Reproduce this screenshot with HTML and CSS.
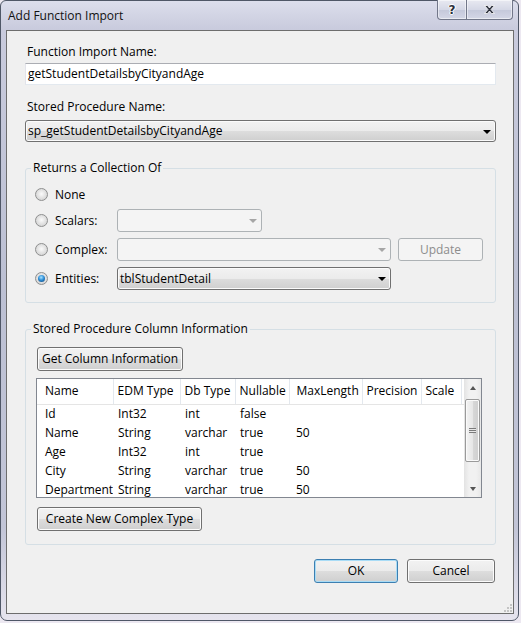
FILE: index.html
```html
<html>
<head>
    <title>Add Function Import</title>
    <link rel="stylesheet" href="styles.css">
</head>
<body>
    <div class="window">
        <div class="titlebar">
            <span class="title">Add Function Import</span>
            <div class="caption-btns">
                <span class="cap-btn help">?</span>
                <span class="cap-btn close">
                    <svg width="11" height="9" viewBox="0 0 11 9"><path d="M0.5 0.5h3l2 2.5l2-2.5h3l-3.5 4l3.5 4h-3l-2-2.5l-2 2.5h-3l3.5-4z" fill="#2b2f3b" stroke="#fff" stroke-width="0.8"/></svg>
                </span>
            </div>
        </div>

        <div class="client">
            <div class="field-label first">Function Import Name:</div>
            <div class="textbox">getStudentDetailsbyCityandAge</div>

            <div class="field-label">Stored Procedure Name:</div>
            <div class="combo wide">
                <span>sp_getStudentDetailsbyCityandAge</span>
                <span class="arrow"></span>
            </div>

            <fieldset class="group returns">
                <legend>Returns a Collection Of</legend>
                <div class="opt-row none">
                    <span class="radio"></span><span class="opt-label">None</span>
                </div>
                <div class="opt-row">
                    <span class="radio"></span><span class="opt-label">Scalars:</span>
                    <div class="combo off short"><span></span><span class="arrow"></span></div>
                </div>
                <div class="opt-row">
                    <span class="radio"></span><span class="opt-label">Complex:</span>
                    <div class="combo off long"><span></span><span class="arrow"></span></div>
                    <button class="btn off update">Update</button>
                </div>
                <div class="opt-row">
                    <span class="radio on"></span><span class="opt-label">Entities:</span>
                    <div class="combo long"><span>tblStudentDetail</span><span class="arrow"></span></div>
                </div>
            </fieldset>

            <fieldset class="group columns">
                <legend>Stored Procedure Column Information</legend>
                <button class="btn get-cols">Get Column Information</button>
                <div class="grid">
                    <div class="grid-view">
                        <table class="col-table">
                            <colgroup>
                                <col style="width:76px">
                                <col style="width:67px">
                                <col style="width:55px">
                                <col style="width:54px">
                                <col style="width:73px">
                                <col style="width:59px">
                                <col style="width:40px">
                                <col>
                            </colgroup>
                            <thead>
                                <tr><th class="first-col">Name</th><th>EDM Type</th><th>Db Type</th><th>Nullable</th><th class="maxlen">MaxLength</th><th>Precision</th><th>Scale</th><th class="filler"></th></tr>
                            </thead>
                            <tbody>
                                <tr><td class="first-col">Id</td><td>Int32</td><td>int</td><td>false</td><td class="maxlen"></td><td></td><td></td><td></td></tr>
                                <tr><td class="first-col">Name</td><td>String</td><td>varchar</td><td>true</td><td class="maxlen">50</td><td></td><td></td><td></td></tr>
                                <tr><td class="first-col">Age</td><td>Int32</td><td>int</td><td>true</td><td class="maxlen"></td><td></td><td></td><td></td></tr>
                                <tr><td class="first-col">City</td><td>String</td><td>varchar</td><td>true</td><td class="maxlen">50</td><td></td><td></td><td></td></tr>
                                <tr><td class="first-col">Department</td><td>String</td><td>varchar</td><td>true</td><td class="maxlen">50</td><td></td><td></td><td></td></tr>
                            </tbody>
                        </table>
                    </div>
                    <div class="vscroll">
                        <div class="sb-btn"><span class="sb-arrow up"></span></div>
                        <div class="sb-track">
                            <div class="sb-thumb"><span class="sb-grip"></span></div>
                        </div>
                        <div class="sb-btn"><span class="sb-arrow down"></span></div>
                    </div>
                </div>
                <button class="btn new-type">Create New Complex Type</button>
            </fieldset>

            <div class="dialog-btns">
                <button class="btn ok">OK</button>
                <button class="btn cancel">Cancel</button>
            </div>

            <svg class="size-grip" width="8" height="8" viewBox="0 0 8 8">
                <rect x="6" y="0" width="2" height="2" fill="#c4c4c4"/>
                <rect x="3" y="3" width="2" height="2" fill="#c4c4c4"/>
                <rect x="6" y="3" width="2" height="2" fill="#c4c4c4"/>
                <rect x="0" y="6" width="2" height="2" fill="#c4c4c4"/>
                <rect x="3" y="6" width="2" height="2" fill="#c4c4c4"/>
                <rect x="6" y="6" width="2" height="2" fill="#c4c4c4"/>
            </svg>
        </div>
    </div>
</body>
</html>
```

FILE: styles.css
```css
* { box-sizing: border-box; }
body { margin: 0; background: #ece8f1; font-family: "Open Sans", sans-serif; font-size: 12px; line-height: 16px; color: #000; }

/* window frame */
.window { width: 519px; height: 621px; border: 1px solid #4f5767; border-radius: 6px 6px 7px 7px; padding: 0 4px 6px 5px; display: flex; flex-direction: column;
    background: linear-gradient(to bottom, #dcdeec 0, #c9cbdd 28px, #bcc0d3 45%, #c2c5d7 85%, #e6e4ee 100%); }
.titlebar { height: 29px; display: flex; justify-content: space-between; align-items: flex-start; }
.title { padding: 7px 0 0 2px; color: #111; }
.caption-btns { display: flex; margin-top: -1px; margin-right: 1px; }
.cap-btn { height: 20px; display: flex; align-items: center; justify-content: center; border: 1px solid #727789; border-top: none;
    background: linear-gradient(to bottom, #e8e9f1 0, #d5d8e6 50%, #c4c8da 51%, #d4d7e6 100%); box-shadow: inset 0 0 0 1px rgba(255,255,255,0.5); }
.cap-btn.help { width: 30px; border-radius: 0 0 0 4px; font-family: "DejaVu Sans", sans-serif; font-weight: bold; font-size: 12px; color: #2b2f3b;
    text-shadow: 1px 0 #fff, -1px 0 #fff, 0 1px #fff, 0 -1px #fff; }
.cap-btn.close { width: 46px; border-left: none; border-radius: 0 0 4px 0; }

/* client area */
.client { height: 584px; border: 1px solid #6d6d6d; background: #f0f0f0; padding: 0 17px 1px 18px; display: flex; flex-direction: column; }
.field-label { margin-top: 14px; height: 16px; padding-left: 2px; }
.field-label.first { margin-top: 13px; }
.textbox { margin-top: 3px; height: 22px; background: #fff; border: 1px solid; border-color: #abadb3 #e3e9ef #e3e9ef #e2e3ea; padding: 2px 2px; }

.combo { height: 23px; border: 1px solid #707070; border-radius: 3px; display: flex; align-items: center; justify-content: space-between; padding: 0 4px 0 2px;
    background: linear-gradient(to bottom, #f2f2f2 0, #ebebeb 50%, #dddddd 51%, #cfcfcf 100%); box-shadow: inset 0 0 0 1px #fbfbfb; }
.combo.wide { margin-top: 5px; height: 22px; }
.combo .arrow { width: 0; height: 0; border-left: 4px solid transparent; border-right: 4px solid transparent; border-top: 4px solid #000; margin-top: 1px; }
.combo.off { background: #f4f4f4; border-color: #adb2b5; box-shadow: none; }
.combo.off .arrow { border-top-color: #a6a6a6; }
.combo.short { width: 145px; }
.combo.long { width: 274px; }

/* group boxes */
.group { margin: 18px 0 0 0; border: 1px solid #d5dfe5; border-radius: 3px; min-width: 0; }
.group legend { padding: 0 2px; line-height: 16px; }
.returns { padding: 7px 0 12px 9px; }
.returns legend { margin-left: -4px; }
.opt-row { height: 23px; display: flex; align-items: center; margin-top: 6px; }
.opt-row.none { margin-top: 0; margin-bottom: -3px; }
.radio { width: 13px; height: 13px; border-radius: 50%; border: 1px solid #8e8f8f; margin-right: 7px; flex: none;
    background: radial-gradient(circle at 50% 45%, #fbfbfb 0, #e4e4e4 45%, #cbcbcb 100%); }
.radio.on::after { content: ""; display: block; width: 7px; height: 7px; margin: 2px; border-radius: 50%;
    background: radial-gradient(circle at 45% 35%, #a8e3ff 0, #2f8fd8 45%, #0d3d6e 100%); }
.opt-label { width: 62px; }

.btn { font: inherit; color: #000; height: 24px; border: 1px solid #707070; border-radius: 3px; padding: 0; white-space: nowrap;
    background: linear-gradient(to bottom, #f2f2f2 0, #ebebeb 50%, #dddddd 51%, #cfcfcf 100%); box-shadow: inset 0 0 0 1px #fcfcfc; }
.btn.off { color: #8d8d8d; background: #f4f4f4; border-color: #adb2b5; box-shadow: none; }
.btn.update { width: 85px; height: 23px; margin-left: 7px; }

.columns { padding: 10px 0 13px 11px; }
.columns legend { margin-left: -6px; }
.get-cols { width: 146px; display: block; }
.new-type { width: 165px; display: block; margin-top: 9px; }

/* data grid */
.grid { width: 446px; height: 120px; margin: 7px 0 0 -1px; border: 1px solid #828790; background: #fff; display: flex; }
.grid-view { flex: 1; overflow: hidden; }
.col-table { width: 100%; table-layout: fixed; border-collapse: collapse; font-size: 12px; line-height: 16px; }
.col-table th { height: 25px; font-weight: normal; text-align: left; padding: 0 0 0 4px; border-right: 1px solid #e3e8ee; border-bottom: 1px solid #e5e5e5; white-space: nowrap; overflow: hidden; }
.col-table th.filler { border-right: none; }
.col-table td { height: 19px; padding: 0 0 0 5px; white-space: nowrap; overflow: hidden; }
.col-table .first-col { padding-left: 8px; }
.col-table .maxlen { padding-left: 7px; }

.vscroll { width: 17px; display: flex; flex-direction: column; background: linear-gradient(to right, #e3e3e3 0, #f1f1f1 30%, #f1f1f1 70%, #e8e8e8 100%); }
.sb-btn { height: 17px; display: flex; align-items: center; justify-content: center; }
.sb-track { flex: 1; padding-top: 3px; }
.sb-thumb { height: 63px; margin: 0 1px; border: 1px solid #9a9a9a; border-radius: 2px; display: flex; align-items: center; justify-content: center;
    background: linear-gradient(to right, #f3f3f3 0, #e7e7e7 50%, #d8d8d8 51%, #cfcfcf 100%); box-shadow: inset 0 0 0 1px #fafafa; }
.sb-grip { width: 7px; height: 5px; background: repeating-linear-gradient(to bottom, #7a7a7a 0, #7a7a7a 1px, #e8e8e8 1px, #e8e8e8 2px); }
.sb-arrow { width: 0; height: 0; border-left: 3.5px solid transparent; border-right: 3.5px solid transparent; }
.sb-arrow.up { border-bottom: 4px solid #555; }
.sb-arrow.down { border-top: 4px solid #555; }

/* dialog buttons */
.dialog-btns { margin-top: 14px; display: flex; justify-content: flex-end; gap: 9px; padding-right: 1px; }
.btn.ok { width: 84px; border-color: #3c7fb1; box-shadow: inset 0 0 0 1px #a9dcf6; }
.btn.cancel { width: 88px; }

.size-grip { margin-top: auto; align-self: flex-end; margin-right: -16px; }
```
